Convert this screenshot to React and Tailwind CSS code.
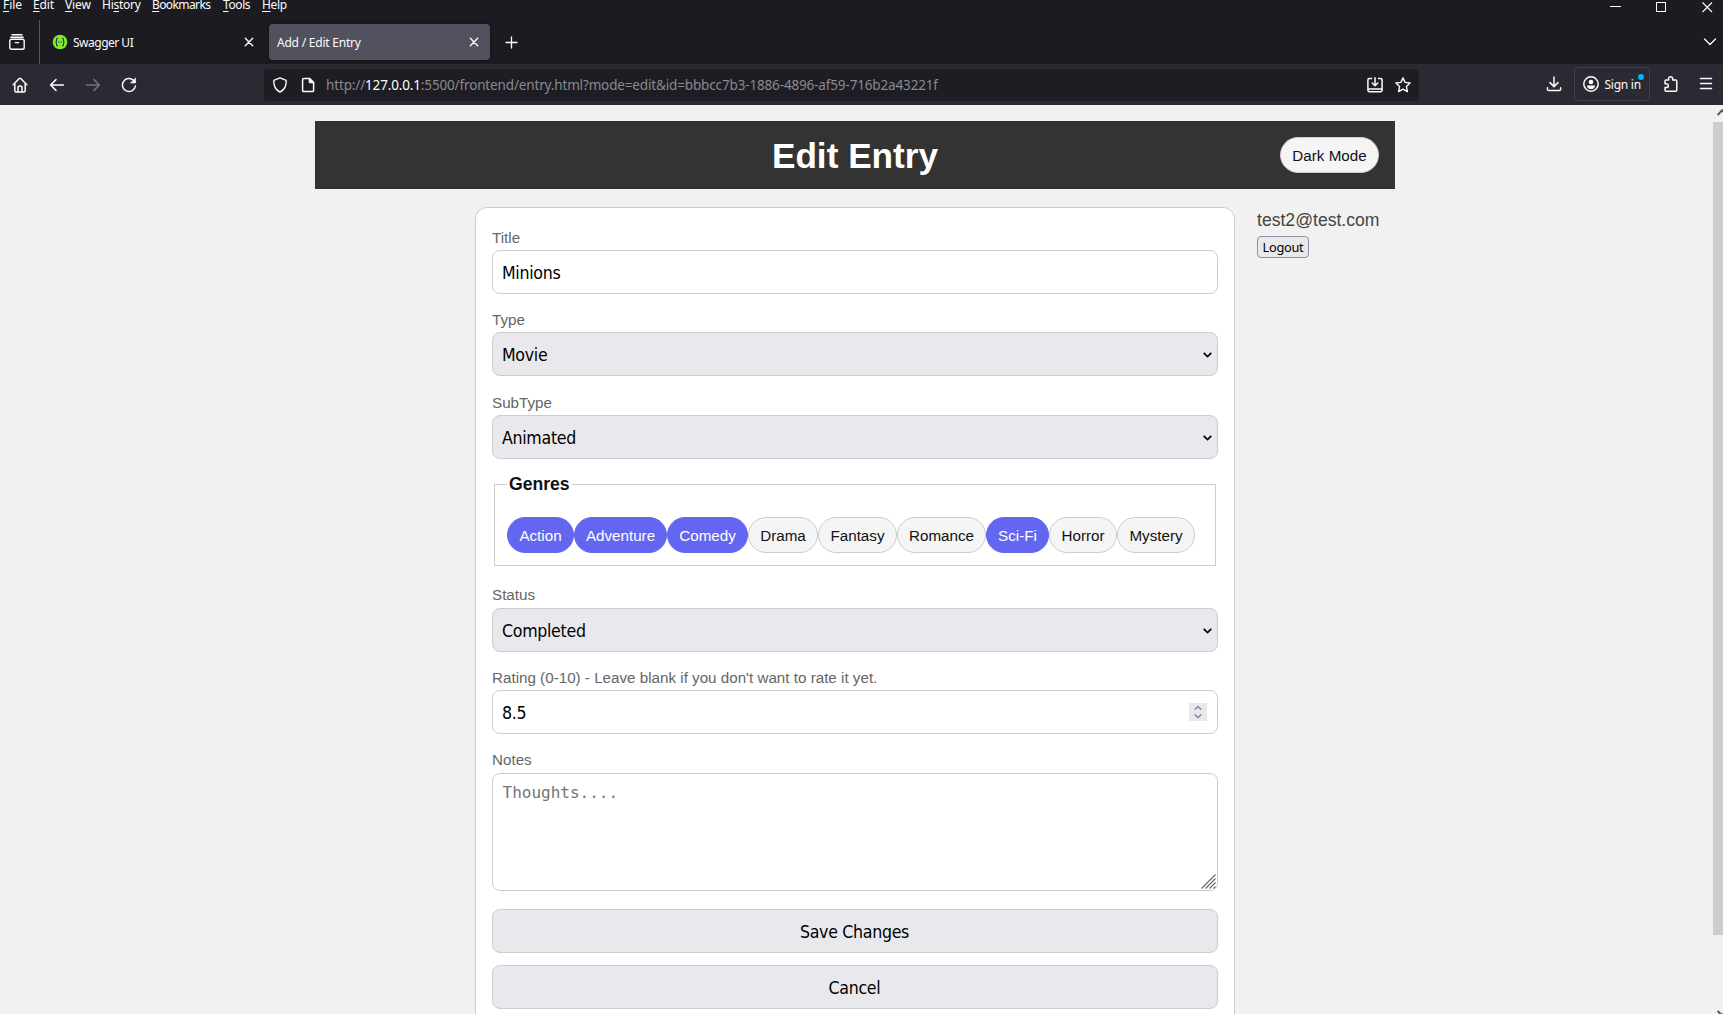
import React from "react";

const MENU = [
  ["", "F", "ile", "w-[30px] tracking-[-0.1px]"],
  ["", "E", "dit", "w-[32px] tracking-[-0.1px]"],
  ["", "V", "iew", "w-[37px] tracking-[-0.1px]"],
  ["Hi", "s", "tory", "w-[50px] tracking-[-0.25px]"],
  ["", "B", "ookmarks", "w-[71px] tracking-[-0.6px]"],
  ["", "T", "ools", "w-[39px] tracking-[-0.4px]"],
  ["", "H", "elp", "w-[40px] tracking-[-0.3px]"],
];

const GENRES = [
  ["Action", true, "w-[67px]"],
  ["Adventure", true, "w-[93px]"],
  ["Comedy", true, "w-[81px]"],
  ["Drama", false, "w-[70px]"],
  ["Fantasy", false, "w-[79px]"],
  ["Romance", false, "w-[89px]"],
  ["Sci-Fi", true, "w-[63px]"],
  ["Horror", false, "w-[68px]"],
  ["Mystery", false, "w-[78px]"],
];

const ui = "font-['Noto_Sans','Open_Sans',sans-serif]";
const field =
  "block h-11 w-full rounded-[8px] border border-[#ccc] pt-[2px] pl-[9px] pr-[10px] text-[17.6px] tracking-[-0.3px] text-black outline-none font-['DejaVu_Sans_Condensed','DejaVu_Sans',sans-serif] [font-stretch:condensed]";

function Icon({ className = "", children, size = 16, width = 1.4 }) {
  return (
    <svg
      className={"shrink-0 " + className}
      width={size}
      height={size}
      viewBox={`0 0 ${size} ${size}`}
      fill="none"
      stroke="currentColor"
      strokeWidth={width}
      strokeLinecap="round"
      strokeLinejoin="round"
    >
      {children}
    </svg>
  );
}

function CloseIcon({ className }) {
  return (
    <Icon className={className} size={10} width={1.4}>
      <path d="M1.3 1.3 8.7 8.7M8.7 1.3 1.3 8.7" />
    </Icon>
  );
}

function TitleBar() {
  return (
    <div className="flex h-5 justify-between bg-[#1c1b22] pl-[3px]">
      <div className={"flex h-5 text-[12px] leading-[10px] text-[#fbfbfe] " + ui}>
        {MENU.map(([pre, key, post, cls]) => (
          <span key={key + post} className={cls}>
            {pre}
            <span className="underline underline-offset-[2px]">{key}</span>
            {post}
          </span>
        ))}
      </div>
      <div className="flex pt-[2px] pr-[10px] text-white">
        <svg className="mr-[35px]" width="11" height="11" shapeRendering="crispEdges">
          <path d="M0 4.5H11" stroke="currentColor" />
        </svg>
        <svg className="mr-[35px]" width="11" height="11" shapeRendering="crispEdges">
          <rect x="0.5" y="0.5" width="9" height="9" fill="none" stroke="currentColor" />
        </svg>
        <svg width="11" height="11">
          <path d="M0.5 0.5 10 10M10 0.5 0.5 10" stroke="currentColor" strokeWidth="1.1" />
        </svg>
      </div>
    </div>
  );
}

function TabStrip() {
  return (
    <div className={"flex h-11 items-center bg-[#1c1b22] text-[12px] text-[#fbfbfe] " + ui}>
      <div className="flex h-full w-10 items-center border-r border-[#56555d] pl-[9px]">
        <Icon width={1.4}>
          <path d="M3 0.8H13M1.8 3.3H14.2" />
          <rect x="0.8" y="5.2" width="14.4" height="10" rx="1.8" />
          <path d="M6.3 8.6H9.7" />
        </Icon>
      </div>
      <div className="flex h-9 w-[229px] items-center pl-3 pr-[15px]">
        <svg width="16" height="16" viewBox="0 0 16 16" className="shrink-0">
          <circle cx="8" cy="8" r="7.3" fill="#85ea2d" />
          <g fill="none" stroke="#173647" strokeWidth="1.1">
            <path d="M6 4.2C4.6 4.1 4.6 4.8 4.6 6S4.4 8 3.4 8C4.4 8 4.6 8.6 4.6 10S4.6 11.9 6 11.8" />
            <path d="M10 4.2C11.4 4.1 11.4 4.8 11.4 6S11.6 8 12.6 8C11.6 8 11.4 8.6 11.4 10S11.4 11.9 10 11.8" />
            <path d="M6 8H10" strokeDasharray="1 0.8" />
          </g>
        </svg>
        <span className="ml-[5px] flex-1 pt-[2px] tracking-[-0.5px]">Swagger UI</span>
        <CloseIcon />
      </div>
      <div className="flex h-9 w-[221px] items-center rounded-[4px] bg-[#52525e] pl-2 pr-[11px] shadow-[0_0_3px_rgba(0,0,0,0.5)]">
        <span className="flex-1 pt-[2px] tracking-[-0.22px]">Add / Edit Entry</span>
        <CloseIcon />
      </div>
      <Icon className="ml-[15px]" size={13} width={1.3}>
        <path d="M6.5 1V12M1 6.5H12" />
      </Icon>
      <Icon className="ml-auto mr-[6px]" size={14} width={1.3}>
        <path d="M1.5 4 7 9.5 12.5 4" />
      </Icon>
    </div>
  );
}

function NavBar() {
  return (
    <div className={"flex h-[41px] items-center bg-[#2b2a33] pl-3 text-[#fbfbfe] " + ui}>
      <Icon width={1.5}>
        <path d="M1.2 7.8 7.2 1.6Q8 0.9 8.8 1.6L14.8 7.8M2.8 6.8V13.8Q2.8 15 4 15H12Q13.2 15 13.2 13.8V6.8" />
        <path d="M6 14.8V10.6Q6 9 8 9T10 10.6V14.8" />
      </Icon>
      <Icon className="ml-[21px]" width={1.5}>
        <path d="M14.5 8H1.8M7 2.6 1.6 8 7 13.4" />
      </Icon>
      <Icon className="ml-5 text-[#75747c]" width={1.5}>
        <path d="M1.5 8H14.2M9 2.6 14.4 8 9 13.4" />
      </Icon>
      <Icon className="ml-5" width={1.5}>
        <path d="M14.4 9A6.5 6.5 0 1 1 12.4 3.3L13.6 4.5" />
        <path d="M14.6 1.2V6H9.8Z" fill="currentColor" strokeWidth="0.6" />
      </Icon>
      <div className="ml-[127px] flex h-8 w-[1155px] items-center rounded-[4px] bg-[#1e1d24] pl-2">
        <Icon width={1.4}>
          <path d="M8 0.9 14.2 3.3C14.6 8.6 12.4 12.8 8 15.2 3.6 12.8 1.4 8.6 1.8 3.3Z" />
        </Icon>
        <Icon className="ml-3" width={1.5}>
          <path d="M3.8 1.4H9.4L13.6 5.6V13.4Q13.6 14.6 12.4 14.6H3.8Q2.6 14.6 2.6 13.4V2.6Q2.6 1.4 3.8 1.4Z" />
          <path d="M9.2 1.4V5.8H13.6Z" fill="currentColor" strokeWidth="1" />
        </Icon>
        <span className="ml-[10px] flex-1 whitespace-nowrap pt-px text-[13.5px] tracking-[-0.15px] text-[#8a8990]">
          http://<span className="text-[#fbfbfe]">127.0.0.1</span>
          :5500/frontend/entry.html?mode=edit&amp;id=bbbcc7b3-1886-4896-af59-716b2a43221f
        </span>
        <Icon width={1.5}>
          <path d="M4.6 1.6H2.2Q0.9 1.6 0.9 2.9V12.8Q0.9 14.8 2.4 14.8H13.6Q15.1 14.8 15.1 12.8V2.9Q15.1 1.6 13.8 1.6H11.4M1 12H15" />
          <path d="M8 0.8V8.6M5.2 6 8 8.8 10.8 6" />
        </Icon>
        <Icon className="ml-3 mr-2" width={1.4}>
          <path d="M8 0.9 10.1 5.4 15.1 6 11.4 9.4 12.4 14.6 8 12.1 3.6 14.6 4.6 9.4 0.9 6 5.9 5.4Z" />
        </Icon>
      </div>
      <Icon className="ml-[126.5px] -mt-px" width={1.5}>
        <path d="M8 1V10.4M4 6.6 8 10.6 12 6.6M1.4 11.8V13.2Q1.4 14.6 2.8 14.6H13.2Q14.6 14.6 14.6 13.2V11.8" />
      </Icon>
      <div className="relative -mt-px ml-3 flex h-[34px] w-[76px] items-center rounded-[4px] border border-[#43424c] pl-2">
        <Icon width={1.5}>
          <circle cx="8" cy="8" r="7.2" />
          <circle cx="8" cy="6" r="2.3" fill="currentColor" stroke="none" />
          <path d="M3.8 9.4H12.2C11.8 11.8 10.2 13 8 13S4.2 11.8 3.8 9.4Z" fill="currentColor" stroke="none" />
        </Icon>
        <span className="ml-[6px] whitespace-nowrap pt-[2px] text-[12px] tracking-[-0.25px]">Sign in</span>
        <span className="absolute right-[5px] top-[6px] size-[6px] rounded-full bg-[#00b3f4]" />
      </div>
      <Icon className="-mt-px ml-[13px]" width={1.5}>
        <path d="M5.6 4V2.8A2 2 0 0 1 9.6 2.8V4H12.6Q13.8 4 13.8 5.2V14Q13.8 15.2 12.6 15.2H3.2Q2 15.2 2 14V11.6H3.4A1.9 1.9 0 0 0 3.4 7.8H2V5.2Q2 4 3.2 4Z" />
      </Icon>
      <Icon className="-mt-[3px] ml-[19px]" width={1.3}>
        <path d="M2.4 3.5H13.6M2.4 8.5H13.6M2.4 13.5H13.6" />
      </Icon>
    </div>
  );
}

function Label({ children, className = "mb-1" }) {
  return (
    <label className={"block h-[17px] text-[15.2px] leading-[17px] text-[#666] " + className}>
      {children}
    </label>
  );
}

function Select({ value, className }) {
  return (
    <div className={"flex items-center justify-between bg-[#e9e9ed] " + field + " " + className}>
      <span>{value}</span>
      <svg className="-mr-[5px]" width="9" height="6" viewBox="0 0 9 6">
        <path d="M0.7 0.9 4.5 4.6 8.3 0.9" fill="none" stroke="#000" strokeWidth="1.7" />
      </svg>
    </div>
  );
}

function EntryForm() {
  return (
    <form className="mt-[18px] h-[860px] w-[760px] rounded-[12px] border border-[#ccc] bg-white px-4 pt-[21px]">
      <Label>Title</Label>
      <input className={"bg-white " + field} defaultValue="Minions" />
      <Label className="mt-[17px] mb-1">Type</Label>
      <Select value="Movie" className="!flex" />
      <Label className="mt-[18px] mb-1">SubType</Label>
      <Select value="Animated" className="!flex" />

      <fieldset className="mx-[2px] mt-[15px] h-[92px] border border-[#ccc] px-3">
        <legend className="h-[21px] px-[2px] text-[17.6px] font-bold leading-[21px] text-[#111]">
          Genres
        </legend>
        <div className="mt-[22px] flex">
          {GENRES.map(([name, on, w]) => (
            <span
              key={name}
              className={
                "flex h-9 items-center justify-center rounded-[20px] border pt-[2px] text-[15.2px] " +
                w +
                (on
                  ? " border-[#6366f1] bg-[#6366f1] text-white"
                  : " border-[#ccc] bg-[#f5f5f5] text-[#111]")
              }
            >
              {name}
            </span>
          ))}
        </div>
      </fieldset>

      <Label className="mt-5 mb-[5px]">Status</Label>
      <Select value="Completed" className="!flex" />
      <Label className="mt-[17px] mb-1">
        Rating (0-10) - Leave blank if you don't want to rate it yet.
      </Label>
      <div className={"!flex items-center justify-between bg-white " + field}>
        <span>8.5</span>
        <svg className="-mt-[2px] bg-[#e9e9ed]" width="18" height="18" viewBox="0 0 18 18">
          <path d="M5.6 6.8 9 3.6 12.4 6.8M5.6 11.4 9 14.6 12.4 11.4" fill="none" stroke="#8f8f9d" strokeWidth="1.5" />
        </svg>
      </div>
      <Label className="mt-[17px] mb-[5px]">Notes</Label>
      <div className="relative h-[118px]">
        <textarea
          className="block h-[118px] w-full resize-none rounded-[8px] border border-[#ccc] bg-white pl-[9.5px] pr-[10px] py-[9px] font-['DejaVu_Sans_Mono',monospace] text-[16px] leading-5 outline-none placeholder:text-[#757575]"
          placeholder="Thoughts...."
        />
        <svg className="absolute bottom-[2px] right-[2px]" width="15" height="15" viewBox="0 0 15 15">
          <path d="M0.5 14.5 14.5 0.5M4.5 14.5 14.5 4.5M8.5 14.5 14.5 8.5M12.5 14.5 14.5 12.5" stroke="#666" strokeWidth="1.1" />
        </svg>
      </div>
      <button type="button" className={"mt-[18px] bg-[#e9e9ed] " + field}>
        Save Changes
      </button>
      <button type="button" className={"mt-3 bg-[#e9e9ed] " + field}>
        Cancel
      </button>
    </form>
  );
}

function Scrollbar() {
  return (
    <div className="flex w-[10px] flex-col items-end justify-between bg-[#f0f0f0]">
      <svg width="6" height="17" viewBox="0 0 6 17">
        <path d="M0.6 10 5 5.4 9 10" fill="none" stroke="#555" strokeWidth="2" />
      </svg>
      <div className="h-[813px] w-full bg-[#cdcdcd]" />
      <div className="flex-1" />
      <svg width="6" height="4" viewBox="0 0 6 4">
        <path d="M0.6 1 5 5.4 9 1" fill="none" stroke="#555" strokeWidth="2" />
      </svg>
    </div>
  );
}

export default function App() {
  return (
    <div className="flex h-screen w-full flex-col overflow-hidden bg-[#f1f1f1] font-['Liberation_Sans',Arial,sans-serif]">
      <TitleBar />
      <TabStrip />
      <NavBar />
      <div className="flex min-h-0 flex-1 overflow-hidden">
        <div className="flex flex-1 flex-col pl-[315px] pt-4">
          <header className="grid h-[68px] w-[1080px] shrink-0 grid-cols-[1fr_auto_1fr] items-center bg-[#333] pr-4">
            <h1 className="col-start-2 pl-4 pt-[2px] text-[35.2px] font-bold leading-none text-white">
              Edit Entry
            </h1>
            <button className="h-9 w-[99px] justify-self-end rounded-[20px] border border-[#ccc] bg-[#f5f5f5] pt-[2px] text-[15.2px] text-[#111]">
              Dark Mode
            </button>
          </header>
          <div className="flex pl-40">
            <EntryForm />
            <aside className="ml-[22px] mt-[21px]">
              <p className="text-[17.6px] leading-5 text-[#444]">test2@test.com</p>
              <button
                className={
                  "mt-[6px] block h-[22px] w-[52px] rounded-[4px] border border-[#8f8f9d] bg-[#e9e9ed] pt-px text-[12.8px] leading-none tracking-[-0.3px] text-black " +
                  ui
                }
              >
                Logout
              </button>
            </aside>
          </div>
        </div>
        <Scrollbar />
      </div>
    </div>
  );
}
